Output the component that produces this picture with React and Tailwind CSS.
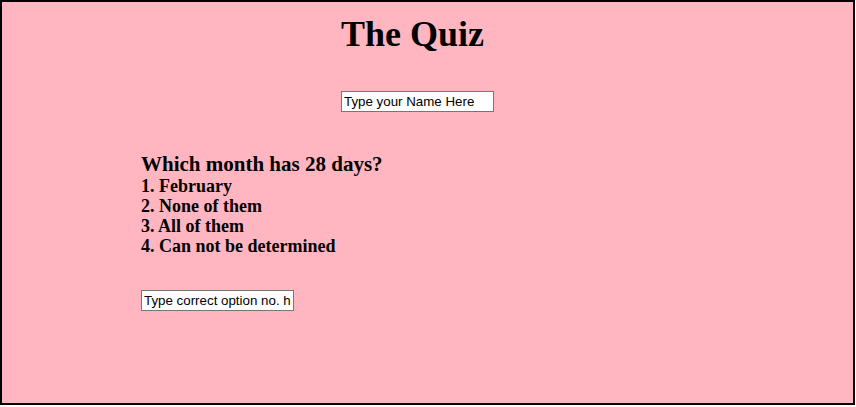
export default function App() {
  return (
    <div className="w-[855px] h-[405px] border-2 border-black bg-[#ffb6c1] font-['Liberation_Serif',serif] text-black">
      <div className="pl-[339px] pt-[12px]">
        <h1 className="text-[36px] leading-[41px] font-bold">The Quiz</h1>
        <input
          defaultValue="Type your Name Here"
          className="mt-[36px] block w-[153px] h-[21px] border border-[#767676] bg-white px-[2px] text-[13.33px] font-['Liberation_Sans',Arial,sans-serif] outline-none"
        />
      </div>
      <div className="pl-[139px] pt-[40px]">
        <h2 className="text-[21px] leading-[24px] font-bold">Which month has 28 days?</h2>
        <div className="text-[18px] leading-[20px] font-bold">
          <p>1. February</p>
          <p>2. None of them</p>
          <p>3. All of them</p>
          <p>4. Can not be determined</p>
        </div>
        <input
          defaultValue="Type correct option no. here"
          className="mt-[34px] block w-[153px] h-[21px] border border-[#767676] bg-white px-[2px] text-[13.33px] font-['Liberation_Sans',Arial,sans-serif] outline-none"
        />
      </div>
    </div>
  );
}
